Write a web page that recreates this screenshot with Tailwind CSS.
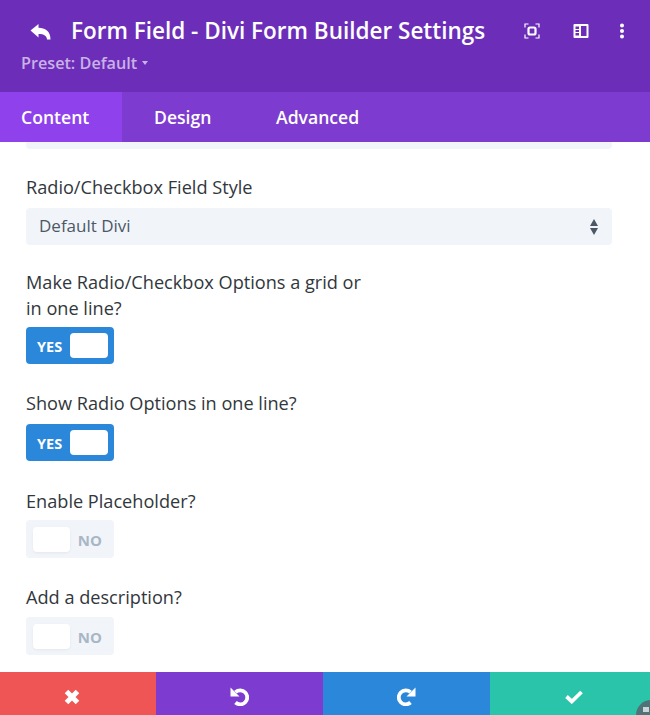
<!DOCTYPE html>
<html lang="en">
<head>
  <meta charset="UTF-8" />
  <title>Form Field Settings</title>
  <script src="https://cdn.jsdelivr.net/npm/@tailwindcss/browser@4"></script>
</head>
<body class="bg-white font-['Open_Sans',sans-serif]">
  <div class="relative flex h-[715px] w-[650px] flex-col overflow-hidden">

    <!-- Header -->
    <header class="h-[92px] shrink-0 bg-[#6c2eb9] text-white">
      <div class="flex h-[62px] items-center">
        <svg class="mt-[1px] ml-[30px] h-[16px] w-[21px]" viewBox="0 0 21 16" fill="#fff"><path d="M0.5 6.500 L8.500 0 V3.800 C15 3.800 20.500 7 20.500 15.500 H17 C17 12 14 10 8.500 10 V13.500 Z" /></svg>
        <h1 class="ml-[20px] text-[22.500px] leading-[30px] font-semibold whitespace-nowrap">Form Field - Divi Form Builder Settings</h1>
      </div>
      <div class="-mt-[9px] flex items-center pl-[21px] text-[#c9b2e6]">
        <span class="text-[16.200px] leading-[20px] font-semibold">Preset: Default</span>
        <span class="ml-[5px] h-0 w-0 border-x-[3px] border-t-[4px] border-x-transparent border-t-[#c9b2e6]"></span>
      </div>
    </header>

    <!-- Header icons -->
    <div class="absolute top-[23px] left-[524px] flex items-center">
      <svg class="h-[16px] w-[16px]" viewBox="0 0 16 16" fill="none" stroke="#fff" stroke-width="1.200"><path d="M4.500 1H1V4.500M11.500 1H15V4.500M4.500 15H1V11.500M11.500 15H15V11.500" /><rect x="4.500" y="4.500" width="7" height="7" rx="1.500" stroke-width="2.200" /></svg>
      <svg class="ml-[33px] h-[16px] w-[16px]" viewBox="0 0 16 16" fill="#fff"><path fill-rule="evenodd" d="M1.500 1H14.500A1 1 0 0 1 15.500 2V14A1 1 0 0 1 14.500 15H1.500A1 1 0 0 1 .500 14V2A1 1 0 0 1 1.500 1ZM2.500 3.500V6H6V3.500ZM2.500 7V9H6V7ZM2.500 10V12.500H6V10ZM8 3V13H13.500V3Z" /></svg>
      <svg class="ml-[30px] h-[16px] w-[6px]" viewBox="0 0 6 16" fill="#fff"><circle cx="3" cy="2.500" r="2" /><circle cx="3" cy="8" r="2" /><circle cx="3" cy="13.500" r="2" /></svg>
    </div>

    <!-- Tabs -->
    <nav class="flex h-[50px] shrink-0 bg-[#7d3bcf] text-[17.600px] font-semibold text-white">
      <a class="flex w-[122px] items-center bg-[#8f42ec] pl-[21px]">Content</a>
      <a class="flex w-[122px] items-center pl-[32px]">Design</a>
      <a class="flex items-center pl-[32px]">Advanced</a>
    </nav>

    <!-- Settings -->
    <main class="flex-1 overflow-hidden pr-[38px] pl-[26px] text-[18.150px] leading-[26px] font-medium text-[#32373c]">
      <div class="h-[7px] rounded-b-[4px] bg-[#f1f5f9]"></div>

      <label class="mt-[25px] block">Radio/Checkbox Field Style</label>
      <div class="mt-[8px] flex h-[37px] items-center justify-between rounded-[4px] bg-[#f1f5f9] pr-[14px] pl-[13px] text-[17px] leading-[24px] text-[#4c5866]">
        <span class="-mt-[2px]">Default Divi</span>
        <svg class="h-[16px] w-[8px]" viewBox="0 0 8 16" fill="#4c5866"><path d="M4 0 L8 7 H0 Z M0 9 H8 L4 16 Z" /></svg>
      </div>

      <label class="mt-[24px] block w-[350px]">Make Radio/Checkbox Options a grid or in one line?</label>
      <div class="mt-[6px] flex h-[37px] w-[88px] items-center rounded-[4px] bg-[#2b87da] pr-[6px] pl-[11px] text-[14.500px] font-bold text-white">
        <span class="mt-[2px]">YES</span>
        <span class="ml-auto h-[25px] w-[38px] rounded-[4px] bg-white"></span>
      </div>

      <label class="mt-[26px] block">Show Radio Options in one line?</label>
      <div class="mt-[8px] flex h-[37px] w-[88px] items-center rounded-[4px] bg-[#2b87da] pr-[6px] pl-[11px] text-[14.500px] font-bold text-white">
        <span class="mt-[2px]">YES</span>
        <span class="ml-auto h-[25px] w-[38px] rounded-[4px] bg-white"></span>
      </div>

      <label class="mt-[27px] block">Enable Placeholder?</label>
      <div class="mt-[6px] flex h-[38px] w-[88px] items-center rounded-[4px] bg-[#f1f5f9] pr-[12px] pl-[7px] text-[15px] font-bold text-[#a9b6c6]">
        <span class="h-[25px] w-[37px] rounded-[4px] bg-white shadow-[0_1px_3px_rgba(0,0,0,0.06)]"></span>
        <span class="mt-[1px] ml-auto">NO</span>
      </div>

      <label class="mt-[26px] block">Add a description?</label>
      <div class="mt-[7px] flex h-[38px] w-[88px] items-center rounded-[4px] bg-[#f1f5f9] pr-[12px] pl-[7px] text-[15px] font-bold text-[#a9b6c6]">
        <span class="h-[25px] w-[37px] rounded-[4px] bg-white shadow-[0_1px_3px_rgba(0,0,0,0.06)]"></span>
        <span class="mt-[1px] ml-auto">NO</span>
      </div>
    </main>

    <!-- Footer actions -->
    <footer class="flex h-[43px] shrink-0">
      <button class="flex w-[156px] items-center justify-center bg-[#ef5555] pt-[6px] pr-[12px]">
        <svg class="h-[16px] w-[16px]" viewBox="0 0 16 16" fill="none" stroke="#fff" stroke-width="5"><path d="M2.500 2.500 L13.500 13.500 M13.500 2.500 L2.500 13.500" /></svg>
      </button>
      <button class="flex w-[167px] items-center justify-center bg-[#7d3bcf] pt-[6px]">
        <svg class="h-[19px] w-[19px]" viewBox="0 0 19 19" fill="none"><path d="M5.500 5.200 A7 7 0 1 1 5.500 15.500" stroke="#fff" stroke-width="3.800" /><path d="M0.500 0.500 L9.500 9.500 H0.500 Z" fill="#fff" /></svg>
      </button>
      <button class="flex w-[167px] items-center justify-center bg-[#2b87da] pt-[6px]">
        <svg class="h-[19px] w-[19px]" viewBox="0 0 19 19" fill="none"><path d="M13.500 5.200 A7 7 0 1 0 13.500 15.500" stroke="#fff" stroke-width="3.800" /><path d="M18.500 0.500 L9.500 9.500 H18.500 Z" fill="#fff" /></svg>
      </button>
      <button class="flex w-[160px] items-center justify-center bg-[#29c4a9] pt-[6px] pl-[8px]">
        <svg class="h-[14px] w-[18px]" viewBox="0 0 18 14" fill="none" stroke="#fff" stroke-width="3.800"><path d="M1.500 6.500 L6.800 11.500 L16.500 2" /></svg>
      </button>
    </footer>

    <!-- Help bubble peeking from the corner -->
    <div class="absolute top-[700px] left-[636px] h-[30px] w-[30px] rounded-full bg-[#4f7379]">
      <span class="absolute top-[7px] left-[7px] h-[5px] w-[6px] bg-white/70"></span>
    </div>
  </div>
</body>
</html>
